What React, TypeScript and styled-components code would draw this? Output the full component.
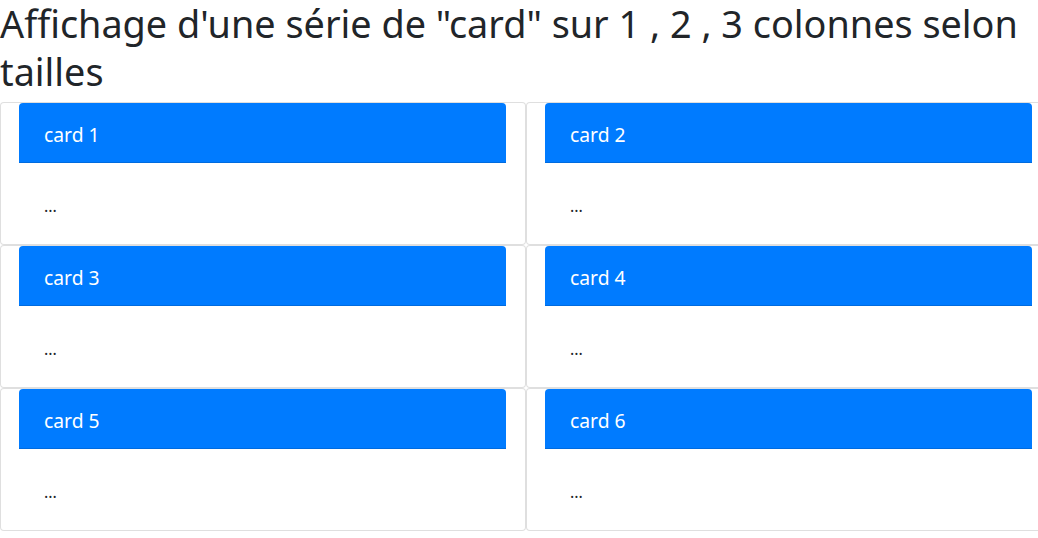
import React from "react";
import styled, { createGlobalStyle } from "styled-components";

const GlobalStyle = createGlobalStyle`
  html, body {
    margin: 0;
    padding: 0;
    background: #fff;
    overflow-x: hidden;
  }
  body {
    font-family: "Noto Sans", "Open Sans", sans-serif;
    font-size: 16px;
    line-height: 1.5;
    color: #212529;
  }
  * { box-sizing: border-box; }
`;

const Page = styled.div`
  width: 1038px;
`;

const Title = styled.h1`
  margin: 0 0 6px 0;
  font-family: "Noto Sans", sans-serif;
  font-weight: 400;
  font-size: 37.8px;
  line-height: 48px;
  color: #212529;
`;

const Grid = styled.div`
  display: grid;
  grid-template-columns: 526px 526px;
  column-gap: 0;
  row-gap: 0;
`;

const Card = styled.div`
  display: flex;
  flex-direction: column;
  height: 143px;
  border: 1px solid rgba(0, 0, 0, 0.125);
  border-radius: 4px;
  background: #fff;
`;

const CardHeader = styled.div`
  margin: 0 19px 0 18px;
  height: 60px;
  padding: 20px 25px 0;
  background: #007bff;
  color: #fff;
  border-bottom: 1px solid rgba(0, 0, 0, 0.125);
  border-radius: 4px 4px 0 0;
  font-size: 19.3px;
  line-height: 24px;
`;

const CardBody = styled.div`
  padding: 31px 43px 0;
  font-size: 16px;
  line-height: 24px;
`;

const cards = [1, 2, 3, 4, 5, 6];

export default function App() {
  return (
    <Page>
      <GlobalStyle />
      <Title>Affichage d'une série de "card" sur 1 , 2 , 3 colonnes selon tailles</Title>
      <Grid>
        {cards.map((n) => (
          <Card key={n}>
            <CardHeader>card {n}</CardHeader>
            <CardBody>...</CardBody>
          </Card>
        ))}
      </Grid>
    </Page>
  );
}
